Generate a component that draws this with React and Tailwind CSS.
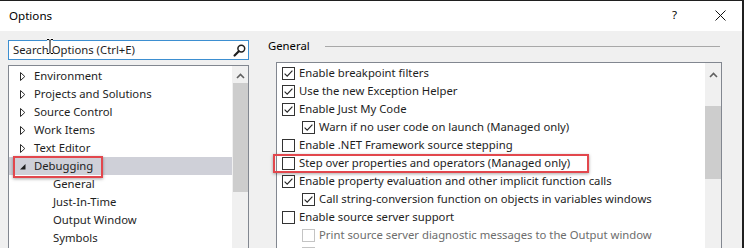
import React from "react";

const FONT = "font-['Noto_Sans',sans-serif]";

function Check({ checked, disabled }) {
  return (
    <div
      className={`w-[13px] h-[13px] shrink-0 border bg-white flex items-center justify-center ${
        disabled ? "border-[#c4c4c4]" : "border-[#333333]"
      }`}
    >
      {checked && (
        <svg width="11" height="11" viewBox="0 0 11 11">
          <path d="M1.6 5.6 L4.2 8.2 L9.4 2.6" fill="none" stroke="#262626" strokeWidth="1.15" />
        </svg>
      )}
    </div>
  );
}

function OptRow({ label, checked, nested, disabled }) {
  return (
    <div className={`h-[18px] flex items-center gap-[4px] ${nested ? "pl-[25px]" : "pl-[5px]"}`}>
      <Check checked={checked} disabled={disabled} />
      {label && (
        <span className={`whitespace-nowrap ${disabled ? "text-[#6d6d6d]" : "text-[#1e1e1e]"}`}>{label}</span>
      )}
    </div>
  );
}

function Collapsed() {
  return (
    <svg width="6" height="9" viewBox="0 0 6 9" className="shrink-0">
      <path d="M0.5 0.5 L4.8 4.5 L0.5 8.5 Z" fill="none" stroke="#2a2a2a" strokeWidth="1" />
    </svg>
  );
}

function Expanded() {
  return (
    <svg width="6" height="9" viewBox="0 0 6 9" className="shrink-0">
      <path d="M5.5 2 L5.5 7.5 L0 7.5 Z" fill="#1e1e1e" />
    </svg>
  );
}

function TreeRow({ label, expanded, selected }) {
  return (
    <div className={`h-[18px] flex items-center pl-[11px] ${selected ? "bg-[#cfd0d8]" : ""}`}>
      {expanded ? <Expanded /> : <Collapsed />}
      <span className="ml-[8px] whitespace-nowrap">{label}</span>
    </div>
  );
}

function Child({ label }) {
  return (
    <div className="h-[18px] flex items-center pl-[44px]">
      <span className="whitespace-nowrap">{label}</span>
    </div>
  );
}

function Chevron() {
  return (
    <svg width="9" height="6" viewBox="0 0 9 6">
      <path d="M1 5 L4.5 1.5 L8 5" fill="none" stroke="#606060" strokeWidth="1.6" />
    </svg>
  );
}

export default function App() {
  return (
    <div
      className={`${FONT} text-[11.3px] text-[#1e1e1e] relative w-[744px] h-[248px] overflow-hidden bg-[#f0f0f0] border-t border-r-2 border-[#1f1f1f]`}
    >
      {/* Title bar */}
      <div className="h-[30px] bg-white flex items-center justify-between pl-[9px]">
        <span className="text-[11.6px] text-black">Options</span>
        <div className="flex items-center">
          <span className="text-[11.6px] text-black mr-[38px] -mt-[2px]">?</span>
          <svg width="11" height="11" viewBox="0 0 11 11" className="mr-[16px]">
            <path d="M0.5 0.5 L10.5 10.5 M10.5 0.5 L0.5 10.5" stroke="#111" strokeWidth="1" />
          </svg>
        </div>
      </div>

      {/* Body */}
      <div className="flex pl-[8px] pt-[9px] gap-[19px]">
        {/* Left column */}
        <div className="w-[241px] flex flex-col">
          <div className="h-[20px] border border-[#3d8fd1] bg-white flex items-center justify-between pl-[4px] pr-[2px]">
            <span className="whitespace-nowrap text-[#1e1e1e]">Search Options (Ctrl+E)</span>
            <svg width="13" height="13" viewBox="0 0 13 13">
              <circle cx="8.3" cy="4.6" r="3.4" fill="none" stroke="#1e1e1e" strokeWidth="1.5" />
              <path d="M5.8 7.3 L1.6 11.5" stroke="#1e1e1e" strokeWidth="2.2" strokeLinecap="round" />
            </svg>
          </div>
          <div className="mt-[5px] h-[200px] border border-[#828790] bg-white flex">
            <div className="flex-1 pt-[1px]">
              <TreeRow label="Environment" />
              <TreeRow label="Projects and Solutions" />
              <TreeRow label="Source Control" />
              <TreeRow label="Work Items" />
              <TreeRow label="Text Editor" />
              <TreeRow label="Debugging" expanded selected />
              <Child label="General" />
              <Child label="Just-In-Time" />
              <Child label="Output Window" />
              <Child label="Symbols" />
            </div>
            <div className="w-[16px] bg-[#f0f0f0] flex flex-col items-center">
              <div className="h-[17px] flex items-center justify-center pt-[2px]">
                <Chevron />
              </div>
              <div className="w-[15px] h-[109px] bg-[#cdcdcd]" />
            </div>
          </div>
        </div>

        {/* Right column */}
        <div className="w-[454px] flex flex-col">
          <div className="h-[12px] flex items-center">
            <span className="text-black">General</span>
            <div className="flex-1 h-px bg-[#a8a8a8] ml-[15px] mr-[2px]" />
          </div>
          <div className="mt-[10px] ml-[8px] h-[200px] border border-[#828790] bg-white flex">
            <div className="flex-1 pt-[1px]">
              <OptRow label="Enable breakpoint filters" checked />
              <OptRow label="Use the new Exception Helper" checked />
              <OptRow label="Enable Just My Code" checked />
              <OptRow label="Warn if no user code on launch (Managed only)" checked nested />
              <OptRow label="Enable .NET Framework source stepping" />
              <OptRow label="Step over properties and operators (Managed only)" />
              <OptRow label="Enable property evaluation and other implicit function calls" checked />
              <OptRow label="Call string-conversion function on objects in variables windows" checked nested />
              <OptRow label="Enable source server support" />
              <OptRow label="Print source server diagnostic messages to the Output window" nested disabled />
              <OptRow nested disabled />
            </div>
            <div className="w-[16px] bg-[#f0f0f0] flex flex-col items-center">
              <div className="h-[20px] flex items-center justify-center pt-[3px]">
                <Chevron />
              </div>
              <div className="mt-[23px] w-[16px] h-[73px] bg-[#cdcdcd]" />
            </div>
          </div>
        </div>
      </div>

      {/* Mouse I-beam cursor */}
      <svg className="absolute left-[46px] top-[37px]" width="8" height="17" viewBox="0 0 8 17">
        <path
          d="M1 1.5 H3 L4 2.5 L5 1.5 H7 M4 2.5 V14.5 M1 15.5 H3 L4 14.5 L5 15.5 H7"
          fill="none"
          stroke="#fff"
          strokeWidth="2.6"
        />
        <path
          d="M1 1.5 H3 L4 2.5 L5 1.5 H7 M4 2.5 V14.5 M1 15.5 H3 L4 14.5 L5 15.5 H7"
          fill="none"
          stroke="#000"
          strokeWidth="1"
        />
      </svg>

      {/* Red annotation boxes */}
      <div className="absolute left-[13px] top-[155px] w-[90px] h-[22px] border-2 border-[#e2474d] shadow-[0_1px_3px_rgba(0,0,0,0.35)]" />
      <div className="absolute left-[273px] top-[153px] w-[316px] h-[19px] border-2 border-[#e2474d] shadow-[0_1px_3px_rgba(0,0,0,0.35)]" />
    </div>
  );
}
